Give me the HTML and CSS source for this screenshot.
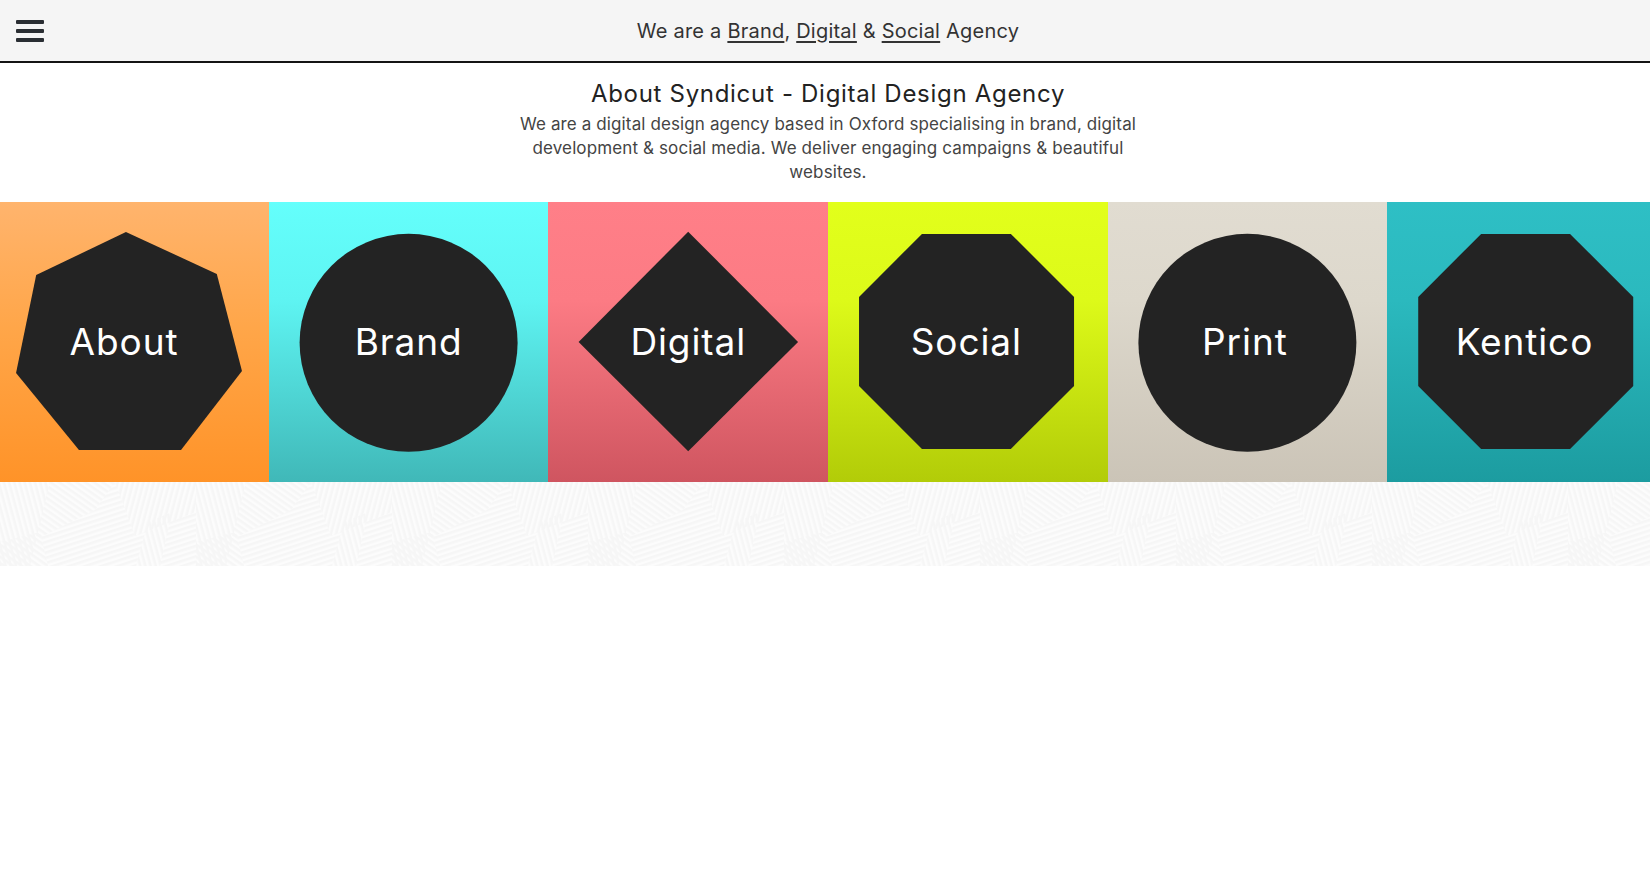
FILE: index.html
```html
<!DOCTYPE html>
<html lang="en">
<head>
<meta charset="utf-8">
<title>Syndicut - Digital Design Agency</title>
<link rel="stylesheet" href="styles.css">
</head>
<body>
<div class="page">
  <header class="topbar">
    <button class="menu-btn" aria-label="Menu">
      <span class="bar"></span><span class="bar"></span><span class="bar"></span>
    </button>
    <p class="tagline">We are a <a href="#">Brand</a>, <a href="#">Digital</a> &amp; <a href="#">Social</a> Agency</p>
    <span class="spacer"></span>
  </header>

  <section class="intro">
    <h1 class="intro-title">About Syndicut - Digital Design Agency</h1>
    <p class="intro-text">We are a digital design agency based in Oxford specialising in brand, digital development &amp; social media. We deliver engaging campaigns &amp; beautiful websites.</p>
  </section>

  <nav class="tiles">
    <a class="tile tile-about" href="#"><span class="shape shape-heptagon"><span class="label label-about">About</span></span></a>
    <a class="tile tile-brand" href="#"><span class="shape shape-circle"><span class="label">Brand</span></span></a>
    <a class="tile tile-digital" href="#"><span class="shape shape-diamond"><span class="label">Digital</span></span></a>
    <a class="tile tile-social" href="#"><span class="shape shape-octagon"><span class="label label-social">Social</span></span></a>
    <a class="tile tile-print" href="#"><span class="shape shape-circle"><span class="label label-print">Print</span></span></a>
    <a class="tile tile-kentico" href="#"><span class="shape shape-octagon"><span class="label label-kentico">Kentico</span></span></a>
  </nav>

  <div class="pattern">
    <svg class="pattern-svg" width="100%" height="84" aria-hidden="true">
      <defs>
        <pattern id="s1" width="5" height="5" patternUnits="userSpaceOnUse" patternTransform="rotate(75)">
          <rect width="5" height="2.5" fill="#f6f6f6"/>
        </pattern>
        <pattern id="s2" width="5" height="5" patternUnits="userSpaceOnUse" patternTransform="rotate(-18)">
          <rect width="5" height="2.5" fill="#f6f6f6"/>
        </pattern>
        <pattern id="s3" width="5" height="5" patternUnits="userSpaceOnUse" patternTransform="rotate(35)">
          <rect width="5" height="2.5" fill="#f6f6f6"/>
        </pattern>
        <pattern id="s4" width="5" height="5" patternUnits="userSpaceOnUse" patternTransform="rotate(105)">
          <rect width="5" height="2.5" fill="#f6f6f6"/>
        </pattern>
        <g id="p1"><polygon points="0,0 50,0 30,84 0,84"/></g>
        <pattern id="weave" width="196" height="84" patternUnits="userSpaceOnUse">
          <rect width="196" height="84" fill="#fcfcfc"/>
          <rect width="196" height="84" fill="url(#s2)"/>
          <g fill="#fcfcfc">
            <polygon points="0,0 50,0 30,84 0,84"/>
            <polygon points="50,0 115,0 95,28 35,58"/>
            <polygon points="115,0 196,0 196,30 135,54"/>
            <polygon points="148,40 172,30 160,84 136,84"/>
            <polygon points="0,60 40,50 48,84 0,84"/>
          </g>
          <polygon points="0,0 50,0 30,84 0,84" fill="url(#s1)"/>
          <polygon points="50,0 115,0 95,28 35,58" fill="url(#s3)"/>
          <polygon points="115,0 196,0 196,30 135,54" fill="url(#s4)"/>
          <polygon points="148,40 172,30 160,84 136,84" fill="url(#s1)"/>
          <polygon points="0,60 40,50 48,84 0,84" fill="url(#s3)"/>
        </pattern>
      </defs>
      <rect width="100%" height="84" fill="url(#weave)"/>
    </svg>
  </div>
</div>
</body>
</html>
```
FILE: styles.css
```css
html, body {
  margin: 0;
  padding: 0;
  background: #ffffff;
  overflow-x: hidden;
}

body {
  font-family: Inter, Lato, "Noto Sans", "Liberation Sans", sans-serif;
  color: #333333;
}

.page {
  width: calc(100% + 6px);
}

/* Header */
.topbar {
  height: 61px;
  background: #f5f5f5;
  border-bottom: 2px solid #141414;
  display: grid;
  grid-template-columns: 1fr auto 1fr;
  align-items: center;
}

.menu-btn {
  justify-self: start;
  margin-left: 16px;
  width: 28px;
  padding: 0;
  border: 0;
  background: transparent;
  display: flex;
  flex-direction: column;
  gap: 5px;
  cursor: pointer;
}

.bar {
  display: block;
  height: 4px;
  width: 28px;
  background: #2a2e33;
  border-radius: 1px;
}

.tagline {
  margin: 0;
  font-size: 20px;
  letter-spacing: 0.22px;
  color: #333333;
}

.tagline a {
  color: #333333;
  text-decoration: underline;
  text-decoration-thickness: 1.5px;
  text-underline-offset: 3px;
}

/* Intro */
.intro {
  text-align: center;
  padding-top: 17px;
  padding-bottom: 18px;
}

.intro-title {
  margin: 0 0 4px;
  font-size: 24px;
  font-weight: 400;
  line-height: 28px;
  letter-spacing: 0.7px;
  color: #222222;
}

.intro-text {
  margin: 0 auto;
  max-width: 630px;
  font-size: 17px;
  line-height: 24px;
  letter-spacing: 0.12px;
  color: #444444;
}

/* Tiles */
.tiles {
  display: flex;
  justify-content: center;
  height: 280px;
}

.tile {
  flex: 0 0 279.6px;
  height: 280px;
  display: flex;
  text-decoration: none;
}

.tile-about   { background: linear-gradient(#ffb46d 0%, #ffa649 45%, #ff9328 100%); }
.tile-brand   { background: linear-gradient(#64fffc 0%, #5ef4f2 35%, #40b8b8 100%); }
.tile-digital { background: linear-gradient(#ff7f88 0%, #fc7b84 35%, #cf5560 100%); }
.tile-social  { background: linear-gradient(#e2ff1b 0%, #ddfa19 35%, #b2cc08 100%); }
.tile-print   { background: linear-gradient(#e1dcd1 0%, #ddd8cc 35%, #cbc4b7 100%); }
.tile-kentico { background: linear-gradient(#2ebfc5 0%, #2bb9be 35%, #1c9ca0 100%); }

.shape {
  flex: 1;
  display: flex;
  align-items: center;
  justify-content: center;
  background: #232323;
}

.shape-heptagon {
  clip-path: polygon(48.9% 10.7%, 81.4% 25.7%, 90.4% 60.4%, 68.6% 88.6%, 32.1% 88.6%, 9.6% 61.1%, 16.8% 26.1%);
}

.shape-circle {
  clip-path: circle(109px at 50% 50.3%);
}

.shape-diamond {
  clip-path: polygon(50% 10.6%, 89.3% 50%, 50% 89%, 10.8% 50%);
}

.shape-octagon {
  clip-path: polygon(33.6% 11.4%, 65.4% 11.4%, 88% 33.9%, 88% 65.7%, 65.4% 88.2%, 33.6% 88.2%, 11.1% 65.7%, 11.1% 33.9%);
}

.label {
  color: #ffffff;
  font-size: 37px;
  letter-spacing: 0.9px;
  line-height: 1;
  margin-top: -1px;
}

.label-about   { margin-right: 10px; }
.label-social  { margin-right: 3px; }
.label-print   { margin-right: 5px; }
.label-kentico { margin-right: 5px; }

/* Pattern strip */
.pattern {
  height: 84px;
}

.pattern-svg {
  display: block;
}
```
